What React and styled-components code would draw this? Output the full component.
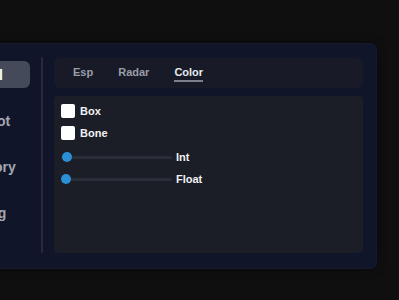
import React, { useState } from 'react'
import styled, { createGlobalStyle } from 'styled-components'

const GlobalStyle = createGlobalStyle`
  html, body {
    margin: 0;
    background: #0f0f0f;
    font-family: "Liberation Sans", Arial, sans-serif;
    overflow: hidden;
  }
`

const Page = styled.div`
  width: 399px;
  height: 300px;
  padding-top: 44px;
  box-sizing: border-box;
  overflow: hidden;
`

const Panel = styled.div`
  margin-left: -63px;
  width: 439px;
  height: 224px;
  box-sizing: border-box;
  padding: 14px 13px 15px 13px;
  display: flex;
  background: #11152a;
  border-radius: 6px;
  box-shadow: 0 0 0 1px #141830, 0 0 10px rgba(0, 0, 0, 0.6);
`

const Sidebar = styled.div`
  width: 80px;
  padding-top: 3px;
  display: flex;
  flex-direction: column;
  gap: 19px;
`

const NavItem = styled.div`
  height: 27px;
  padding-left: 12px;
  display: flex;
  align-items: center;
  border-radius: 6px;
  font-size: 14px;
  font-weight: 700;
  color: ${p => (p.$active ? '#ffffff' : '#a4a7b2')};
  background: ${p => (p.$active ? '#454a5a' : 'transparent')};
`

const Divider = styled.div`
  width: 2px;
  margin: -1px 11px 0 11px;
  background: #262a3b;
  border-radius: 1px;
`

const Main = styled.div`
  flex: 1;
  display: flex;
  flex-direction: column;
  gap: 8px;
`

const TabBar = styled.div`
  height: 30px;
  padding-left: 19px;
  display: flex;
  align-items: center;
  gap: 25px;
  background: #181b27;
  border-radius: 6px;
`

const Tab = styled.div`
  font-size: 11px;
  font-weight: 700;
  line-height: 13px;
  padding-top: 2px;
  padding-bottom: 1px;
  color: ${p => (p.$active ? '#e9eaee' : '#9a9da8')};
  border-bottom: 2px solid ${p => (p.$active ? '#7d808b' : 'transparent')};
`

const Content = styled.div`
  flex: 1;
  padding: 8px 7px;
  display: flex;
  flex-direction: column;
  gap: 10px;
  background: #1b1e27;
  border-radius: 4px;
`

const Group = styled.div`
  display: flex;
  flex-direction: column;
  gap: 8px;
`

const Row = styled.div`
  height: 14px;
  display: flex;
  align-items: center;
`

const Check = styled.div`
  width: 14px;
  height: 14px;
  border-radius: 2px;
  background: #ffffff;
  margin-right: 5px;
`

const Label = styled.span`
  font-size: 11px;
  font-weight: 700;
  color: #f2f2f4;
`

const Slider = styled.div`
  position: relative;
  width: 111px;
  height: 3px;
  margin-right: 4px;
  background: #2a2d37;
  border-radius: 2px;
`

const Thumb = styled.div`
  position: absolute;
  top: 50%;
  width: 10px;
  height: 10px;
  margin-top: -5px;
  margin-left: 1px;
  border-radius: 50%;
  background: #2b8fd6;
`

const navItems = ['Visual', 'Aimbot', 'Memory', 'Config']
const tabs = ['Esp', 'Radar', 'Color']

export default function App() {
  const [tab, setTab] = useState('Color')
  const [nav, setNav] = useState('Visual')

  return (
    <Page>
      <GlobalStyle />
      <Panel>
        <Sidebar>
          {navItems.map(n => (
            <NavItem key={n} $active={n === nav} onClick={() => setNav(n)}>{n}</NavItem>
          ))}
        </Sidebar>
        <Divider />
        <Main>
          <TabBar>
            {tabs.map(t => (
              <Tab key={t} $active={t === tab} onClick={() => setTab(t)}>{t}</Tab>
            ))}
          </TabBar>
          <Content>
            <Group>
              <Row><Check /><Label>Box</Label></Row>
              <Row><Check /><Label>Bone</Label></Row>
            </Group>
            <Group>
              <Row><Slider><Thumb style={{ left: 0 }} /></Slider><Label>Int</Label></Row>
              <Row><Slider><Thumb style={{ left: -1 }} /></Slider><Label>Float</Label></Row>
            </Group>
          </Content>
        </Main>
      </Panel>
    </Page>
  )
}
